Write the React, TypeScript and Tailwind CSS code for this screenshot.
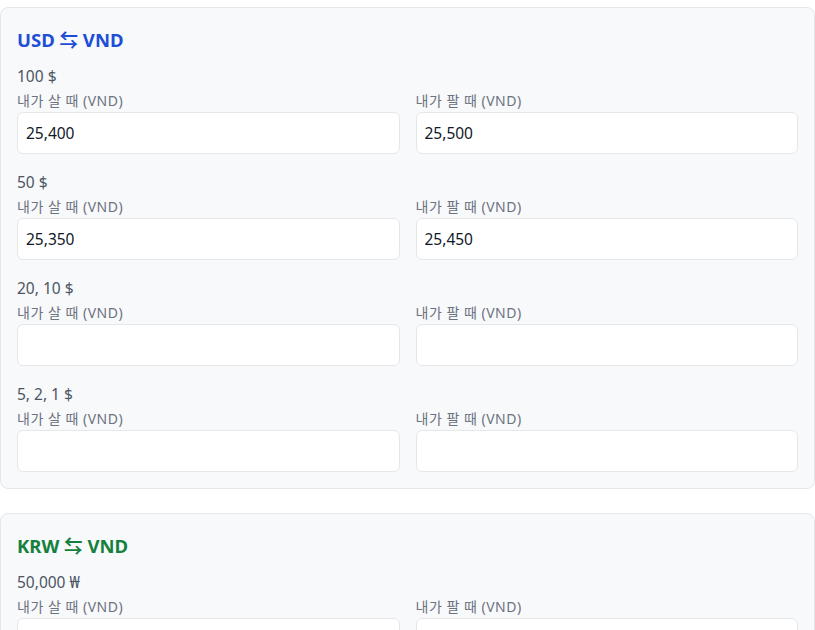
import React from "react";

interface Row {
  label: string;
  buy: string;
  sell: string;
}

interface Section {
  from: string;
  color: string;
  rows: Row[];
}

const sections: Section[] = [
  {
    from: "USD",
    color: "text-[#1d4ed8]",
    rows: [
      { label: "100 $", buy: "25,400", sell: "25,500" },
      { label: "50 $", buy: "25,350", sell: "25,450" },
      { label: "20, 10 $", buy: "", sell: "" },
      { label: "5, 2, 1 $", buy: "", sell: "" },
    ],
  },
  {
    from: "KRW",
    color: "text-[#15803d]",
    rows: [
      { label: "50,000 ₩", buy: "", sell: "" },
      { label: "10,000 ₩", buy: "", sell: "" },
    ],
  },
];

function Field({ label, value }: { label: string; value: string }) {
  return (
    <div className="flex flex-col">
      <label className="text-[14px] leading-[18px] tracking-[0.5px] text-[#6b7280]">{label}</label>
      <input
        defaultValue={value}
        className="mt-0.5 h-[42px] w-full rounded-md border border-[#e5e7eb] bg-white px-2 text-[15.5px] text-[#111827] outline-none"
      />
    </div>
  );
}

export default function App() {
  return (
    <div
      className="min-h-screen bg-white pt-[7px]"
      style={{ fontFamily: '"Noto Sans", "Noto Sans CJK KR", sans-serif' }}
    >
      {sections.map((s) => (
        <div
          key={s.from}
          className="mb-6 rounded-lg border border-[#e5e7eb] bg-[#f8f9fb] p-4"
        >
          <h2 className={`mt-0.5 text-[18.5px] font-bold leading-7 ${s.color}`}>
            {s.from} ⇆ VND
          </h2>
          <div className="mt-2.5 flex flex-col gap-4">
            {s.rows.map((r) => (
              <div key={r.label}>
                <div className="mt-0.5 text-[15.5px] leading-5 text-[#4b5563]">{r.label}</div>
                <div className="mt-1.5 grid grid-cols-2 gap-4">
                  <Field label="내가 살 때 (VND)" value={r.buy} />
                  <Field label="내가 팔 때 (VND)" value={r.sell} />
                </div>
              </div>
            ))}
          </div>
        </div>
      ))}
    </div>
  );
}
